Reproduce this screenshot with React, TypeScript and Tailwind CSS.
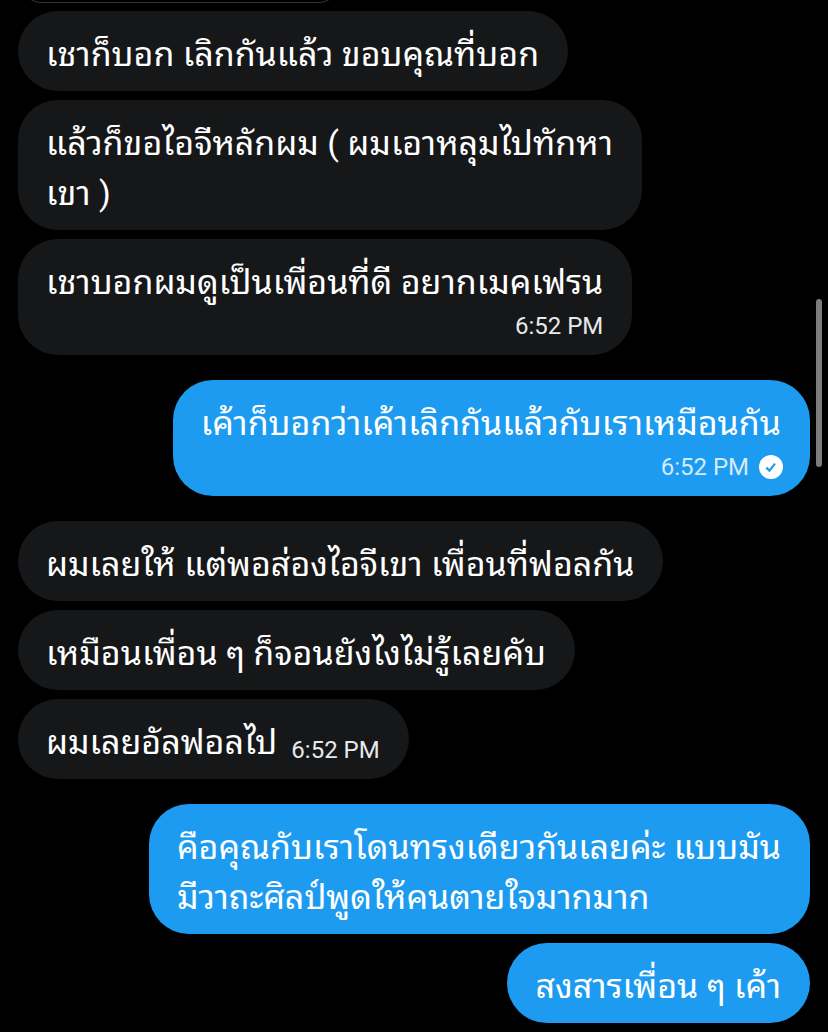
import React from "react";

type Message = { lines: string[]; mine?: boolean; time?: string; inline?: boolean; read?: boolean };

const groups: Message[][] = [
  [
    { lines: ["เชาก็บอก เลิกกันแล้ว ขอบคุณที่บอก"] },
    { lines: ["แล้วก็ขอไอจีหลักผม ( ผมเอาหลุมไปทักหา", "เขา )"] },
    { lines: ["เชาบอกผมดูเป็นเพื่อนที่ดี อยากเมคเฟรน"], time: "6:52 PM" },
  ],
  [{ lines: ["เค้าก็บอกว่าเค้าเลิกกันแล้วกับเราเหมือนกัน"], mine: true, time: "6:52 PM", read: true }],
  [
    { lines: ["ผมเลยให้ แต่พอส่องไอจีเขา เพื่อนที่ฟอลกัน"] },
    { lines: ["เหมือนเพื่อน ๆ ก็จอนยังไงไม่รู้เลยคับ"] },
    { lines: ["ผมเลยอัลฟอลไป"], time: "6:52 PM", inline: true },
  ],
  [
    { lines: ["คือคุณกับเราโดนทรงเดียวกันเลยค่ะ แบบมัน", "มีวาถะศิลป์พูดให้คนตายใจมากมาก"], mine: true },
    { lines: ["สงสารเพื่อน ๆ เค้า"], mine: true },
  ],
];

function ReadMark() {
  return (
    <svg viewBox="0 0 24 24" className="-mr-0.5 size-6" aria-label="Read" role="img">
      <circle cx="12" cy="12" r="12" fill="white" />
      <path d="M7.3 12.6l3.1 3L16 8.6" fill="none" stroke="#1d9bf0" strokeWidth="2.2" />
    </svg>
  );
}

function Bubble({ message }: { message: Message }) {
  const { lines, mine, time, inline, read } = message;
  const tone = mine ? "self-end bg-[#1d9bf0]" : "self-start bg-[#161719]";
  const flow = inline ? "flex-row items-end gap-[14px]" : "flex-col gap-[5px]";
  return (
    <li className={`flex rounded-[40px] pt-[18px] pr-[29px] pb-3 pl-7 text-white ${tone} ${flow}`}>
      <p className="text-[34px] leading-[50px] whitespace-nowrap">
        {lines.map((line) => (
          <span key={line} className="block">{line}</span>
        ))}
      </p>
      {time && (
        <div className={`flex items-center gap-[10px] self-end pb-[3px] text-[24px] leading-7 ${mine ? "text-[#d2ebfc]" : "text-[#e7e9ea]"}`}>
          <time>{time}</time>
          {read && <ReadMark />}
        </div>
      )}
    </li>
  );
}

export default function App() {
  return (
    <main className="relative flex min-h-screen flex-col gap-[25px] overflow-hidden bg-black px-[18px] pb-2 font-[Roboto,'Noto_Sans_Thai_Looped',Loma,Garuda,Umpush,Waree,sans-serif]">
      <div className="-mt-[77px] -mb-[17px] h-20 w-[324px] shrink-0 rounded-3xl border border-[#2f3336]" />
      {groups.map((group, i) => (
        <ul key={i} className="flex flex-col gap-[9px]">
          {group.map((message) => (
            <Bubble key={message.lines[0]} message={message} />
          ))}
        </ul>
      ))}
      <div className="absolute top-[299px] right-[6px] h-[168px] w-[6px] rounded-full bg-[#7c7c7c]" />
    </main>
  );
}
